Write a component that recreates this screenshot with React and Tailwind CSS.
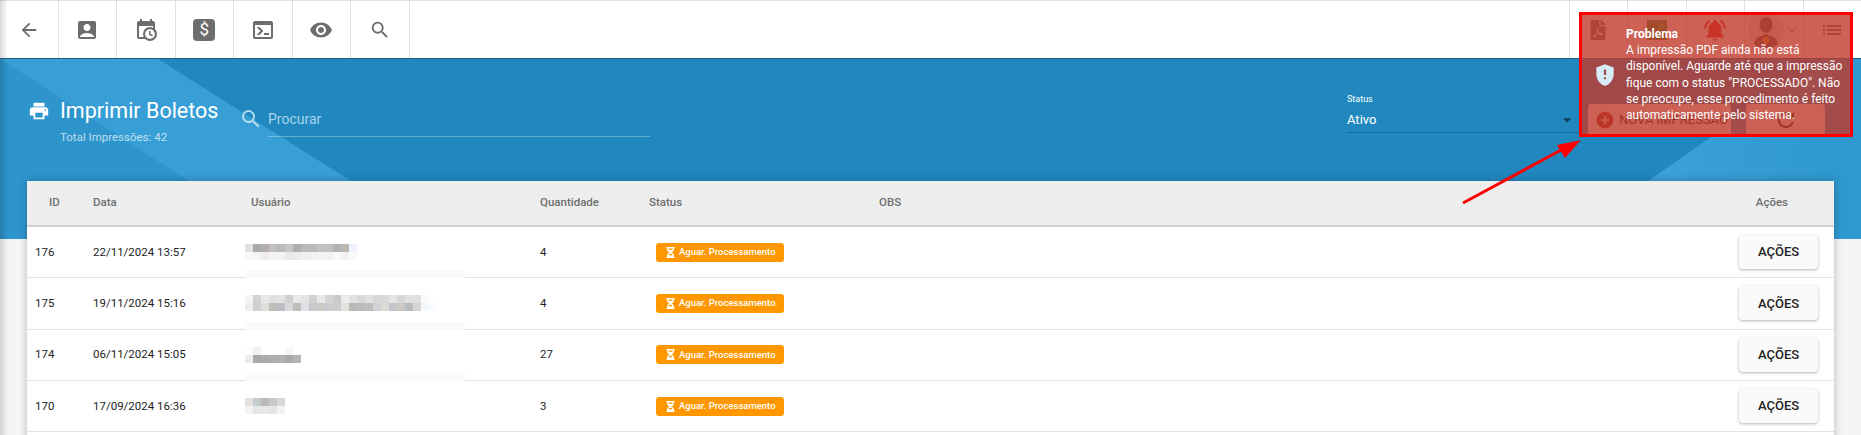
import {
  MdAccountBox,
  MdAddCircle,
  MdArrowBack,
  MdArrowDropDown,
  MdExpandMore,
  MdGppMaybe,
  MdList,
  MdNotificationsActive,
  MdPrint,
  MdRefresh,
  MdSearch,
  MdVisibility,
} from 'react-icons/md'
import { FaFilePdf, FaHourglassHalf } from 'react-icons/fa'

const rows = [
  {
    id: 176,
    date: '22/11/2024 13:57',
    qty: 4,
    band: true,
    pixels: [
      ['#e6e2df', '#a8abae', '#b4aeac', '#c4c0c0', '#bfbab9', '#c4c7c8', '#aeadb2', '#bcb7b0', '#b9b8bd', '#bcc4c8', '#c4c0bb', '#b4b3b2', '#bdb8b0', '#eef4fb'],
      ['#f8f8f8', '#f5f5f5', '#ededed', '#f3f3f3', '#f3f3f3', '#eaeaea', '#ececec', '#f0f0f0', '#f0f0f0', '#f2f2f2', '#f2f2f2', '#f8f8f8', '#f2f2f2', '#fafafa'],
    ],
  },
  {
    id: 175,
    date: '19/11/2024 15:16',
    qty: 4,
    band: true,
    pixels: [
      ['#f7f3f0', '#d2d2d2', '#e8e8e8', '#dfe0e0', '#e2e2e2', '#d2d0cc', '#e8e8ea', '#e4e4e4', '#d4d2d0', '#e8e8e6', '#d6d4d0', '#c9cacc', '#ececea', '#e2e2e0', '#d8d8d8', '#e2e2e0', '#d8d8dc', '#d8d8d8', '#e2e4e6', '#d8d6d4', '#e0e0e0', '#e0e0e0', '#fafcfc', '#ffffff'],
      ['#ececec', '#cfcfcf', '#dededa', '#bfbdb8', '#bcc0c4', '#d8d8d8', '#c0beb8', '#e0e0e6', '#c8c8c8', '#cccac6', '#ccccd0', '#cccccc', '#e4e0dc', '#b8b8b8', '#bbbbbb', '#bebebe', '#d0d2d4', '#dcdcd4', '#c4c6cc', '#ccc8c4', '#b8bcbe', '#d4d4d4', '#f4f8fc', '#f8fbff'],
    ],
  },
  {
    id: 174,
    date: '06/11/2024 15:05',
    qty: 27,
    band: true,
    pixels: [
      ['#fcfcfc', '#f0f0f0', '#ffffff', '#ffffff', '#ffffff', '#f6f6f6', '#ffffff'],
      ['#efece8', '#aaa8a8', '#ada9a8', '#b0aeac', '#aeb0b2', '#aba8a6', '#b4b4b6'],
    ],
  },
  {
    id: 170,
    date: '17/09/2024 16:36',
    qty: 3,
    band: false,
    pixels: [
      ['#e6e0dc', '#c4ccd0', '#bcb8b8', '#c8c8c8', '#d8d8dc'],
      ['#f4f4f4', '#e6e6e6', '#e8e8e8', '#e4e4e4', '#f0f2f4'],
    ],
  },
]

const columns = 'grid grid-cols-[66px_158px_289px_109px_230px_1fr_auto] items-center'

function ToolButton({ children, edge = 'border-r' }) {
  return (
    <div className={`flex h-full w-[58.5px] shrink-0 items-center justify-center border-[#e0e0e0] text-[#6d6d6d] ${edge}`}>
      {children}
    </div>
  )
}

function CalendarClockIcon() {
  return (
    <svg viewBox="0 0 24 24" width="24" height="24" fill="currentColor">
      <path d="M15,13H16.5V15.82L18.94,17.23L18.19,18.53L15,16.69V13M19,8H5V19H9.67C9.24,18.09 9,17.07 9,16A7,7 0 0,1 16,9C17.07,9 18.09,9.24 19,9.67V8M5,21C3.89,21 3,20.1 3,19V5C3,3.89 3.89,3 5,3H6V1H8V3H16V1H18V3H19A2,2 0 0,1 21,5V11.1C22.24,12.36 23,14.09 23,16A7,7 0 0,1 16,23C14.09,23 12.36,22.24 11.1,21H5M16,11.15A4.85,4.85 0 0,0 11.15,16C11.15,18.68 13.32,20.85 16,20.85A4.85,4.85 0 0,0 20.85,16C20.85,13.32 18.68,11.15 16,11.15Z" />
    </svg>
  )
}

function ConsoleIcon() {
  return (
    <svg viewBox="0 0 24 24" width="24" height="24" fill="currentColor">
      <path d="M20,19V7H4V19H20M20,3A2,2 0 0,1 22,5V19A2,2 0 0,1 20,21H4A2,2 0 0,1 2,19V5C2,3.89 2.9,3 4,3H20M13,17V15H18V17H13M9.58,13L5.57,9H8.4L11.7,12.3C12.09,12.69 12.09,13.33 11.7,13.72L8.42,17H5.59L9.58,13Z" />
    </svg>
  )
}

function Toolbar() {
  return (
    <div className="relative z-10 flex h-[59px] justify-between border-t border-b border-t-[#e0e0e0] border-b-[#1b5f85] bg-white">
      <div className="flex">
        <ToolButton><MdArrowBack size={22} /></ToolButton>
        <ToolButton><MdAccountBox size={24} /></ToolButton>
        <ToolButton><CalendarClockIcon /></ToolButton>
        <ToolButton>
          <span className="flex h-[22px] w-[22px] items-center justify-center rounded-[4px] bg-[#6d6d6d] text-[17px] text-white">$</span>
        </ToolButton>
        <ToolButton><ConsoleIcon /></ToolButton>
        <ToolButton><MdVisibility size={24} /></ToolButton>
        <ToolButton><MdSearch size={22} /></ToolButton>
      </div>
      <div className="flex">
        <ToolButton edge="border-l"><FaFilePdf size={20} /></ToolButton>
        <ToolButton edge="border-l">
          <span className="flex h-[20px] w-[20px] items-center justify-center bg-[#2f8f2f]">
            <svg viewBox="0 0 20 20" width="20" height="20" fill="none" stroke="#55cc33" strokeWidth="2.5">
              <path d="M4 11l4 4 8-11" />
            </svg>
          </span>
        </ToolButton>
        <ToolButton edge="border-l"><MdNotificationsActive size={26} className="text-[#e5231f]" /></ToolButton>
        <ToolButton edge="border-l">
          <span className="relative flex items-center">
            <svg viewBox="0 0 36 36" width="36" height="36">
              <circle cx="18" cy="18" r="18" fill="#e4e4e4" />
              <ellipse cx="18" cy="13" rx="6.5" ry="8" fill="#555555" />
              <path d="M6 32c1-7 7-8 12-10 5 2 11 3 12 10a18 18 0 0 1-24 0z" fill="#555555" />
              <circle cx="18" cy="28" r="3.5" fill="#e0a030" />
            </svg>
            <MdExpandMore size={14} className="ml-[1px] text-[#777]" />
          </span>
        </ToolButton>
        <ToolButton edge="border-l"><MdList size={24} /></ToolButton>
      </div>
    </div>
  )
}

function HeaderShapes() {
  return (
    <svg className="absolute inset-0 h-full w-full" preserveAspectRatio="none">
      <defs>
        <linearGradient id="rightBand" gradientUnits="userSpaceOnUse" x1="1650" y1="0" x2="1830" y2="0">
          <stop offset="0" stopColor="#3ba2d9" />
          <stop offset="1" stopColor="#2f98ce" />
        </linearGradient>
      </defs>
      <polygon points="0,0 277,180 0,180" fill="#2d95cc" />
      <polygon points="0,0 158,0 443,180 277,180" fill="#379fd6" />
      <polygon points="1824,0 1861,0 1861,180 1564,180" fill="url(#rightBand)" />
    </svg>
  )
}

function PageHeader() {
  return (
    <div className="relative h-[180px] bg-[#2088bf]">
      <HeaderShapes />
      <div className="relative flex items-start">
        <div className="ml-[28px] mt-[40px] flex w-[211px] shrink-0 items-start">
          <MdPrint size={22} className="mt-[1px] text-white" />
          <div className="ml-[10px]">
            <div className="text-[21.5px] leading-[24px] text-white">Imprimir Boletos</div>
            <div className="mt-[7px] text-[11.5px] leading-[14px] text-white/70">Total Impressões: 42</div>
          </div>
        </div>
        <div className="mt-[48px] flex shrink-0 items-start">
          <MdSearch size={24} className="text-[#b5dbee]" />
          <div className="ml-[5px] mt-[1px] h-[29px] w-[382px] border-b border-white/30 text-[14px] leading-[22px] text-[#a5d3ea]">Procurar</div>
        </div>
        <div className="ml-[697px] mt-[35px] w-[234px] shrink-0 border-b border-[#1a6f9d]">
          <div className="text-[9px] leading-[11px] text-white">Status</div>
          <div className="flex h-[27px] items-center justify-between pr-[4px] pt-[3px] text-[13px] text-white">
            <span>Ativo</span>
            <MdArrowDropDown size={20} className="text-[#12405c]" />
          </div>
        </div>
        <div className="ml-[7px] mt-[45px] flex h-[32px] w-[143px] shrink-0 items-center whitespace-nowrap rounded-[3px] bg-white/95 pl-[7px] text-[13px] text-[#111]">
          <MdAddCircle size={20} className="mr-[4px] text-[#a52a25]" />
          NOVA IMPRESSÃO
        </div>
        <div className="ml-[15px] mt-[45px] flex h-[32px] w-[79px] shrink-0 items-center justify-center rounded-[3px] bg-white/95 text-[#222]">
          <MdRefresh size={24} />
        </div>
      </div>
    </div>
  )
}

function UserBlur({ pixels }) {
  return (
    <div className="flex flex-col">
      {pixels.map((line, i) => (
        <div key={i} className="flex">
          {line.map((color, j) => (
            <span key={j} className="h-[8px] w-[8px]" style={{ backgroundColor: color }} />
          ))}
        </div>
      ))}
    </div>
  )
}

function StatusBadge() {
  return (
    <span className="ml-[7px] flex h-[19px] w-[128px] items-center rounded-[3px] bg-[#ff9800] pl-[9px] text-[9.5px] font-medium text-white">
      <FaHourglassHalf size={11} className="mr-[3px]" />
      Aguar. Processamento
    </span>
  )
}

function TableCard() {
  return (
    <div className="relative mx-[27px] -mt-[58px] bg-white shadow-[0_0_8px_rgba(0,0,0,0.25)]">
      <div className={`${columns} h-[46px] border-b-2 border-[#d0d0d0] bg-[#eeeeee] text-[11.5px] font-medium text-[#6f6f6f]`}>
        <span className="pl-[22px]">ID</span>
        <span>Data</span>
        <span>Usuário</span>
        <span>Quantidade</span>
        <span>Status</span>
        <span>OBS</span>
        <span className="pr-[46px]">Ações</span>
      </div>
      {rows.map((row) => (
        <div key={row.id} className={`${columns} relative h-[51.33px] border-b border-[#e2e2e2] text-[11.5px] text-[#222]`}>
          <span className="pl-[8px]">{row.id}</span>
          <span>{row.date}</span>
          <span className="-ml-[6px]"><UserBlur pixels={row.pixels} /></span>
          <span>{row.qty}</span>
          <StatusBadge />
          <span />
          <span className="pr-[16px]">
            <span className="flex h-[34px] w-[79px] items-center justify-center rounded-[4px] bg-[#fafafa] text-[13px] font-medium text-[#222] shadow-[0_1px_3px_rgba(0,0,0,0.3)]">AÇÕES</span>
          </span>
          {row.band ? <span className="absolute -bottom-[1px] left-[218px] h-[8px] w-[220px] bg-[#fafafa]" /> : null}
        </div>
      ))}
      <div className="h-[20px]" />
    </div>
  )
}

function ProblemToast() {
  return (
    <div className="absolute right-[8px] top-[12px] z-20 flex h-[125px] w-[274px] items-center border-[3px] border-[#ff0000] bg-[#c0392b]/80 pl-[10px] text-white">
      <MdGppMaybe size={26} className="shrink-0 text-[#d8ecf7]" />
      <div className="ml-[8px] whitespace-nowrap text-[12px] leading-[16.3px]">
        <div className="font-bold">Problema</div>
        A impressão PDF ainda não está<br />
        disponível. Aguarde até que a impressão<br />
        fique com o status "PROCESSADO". Não<br />
        se preocupe, esse procedimento é feito<br />
        automaticamente pelo sistema.
      </div>
    </div>
  )
}

function ArrowAnnotation() {
  return (
    <svg className="absolute left-[1455px] top-[135px] z-20" width="130" height="72" viewBox="0 0 130 72">
      <line x1="8" y1="68" x2="108" y2="14" stroke="#ff0000" strokeWidth="3" />
      <polygon points="126,5 102,10 110,23" fill="#ff0000" />
    </svg>
  )
}

export default function App() {
  return (
    <div className="relative h-[435px] overflow-hidden bg-[#f5f5f5] font-['Roboto',sans-serif]">
      <Toolbar />
      <PageHeader />
      <TableCard />
      <ProblemToast />
      <ArrowAnnotation />
      <div className="absolute inset-y-0 left-0 z-10 w-[8px] bg-gradient-to-r from-black/15 to-transparent" />
    </div>
  )
}
